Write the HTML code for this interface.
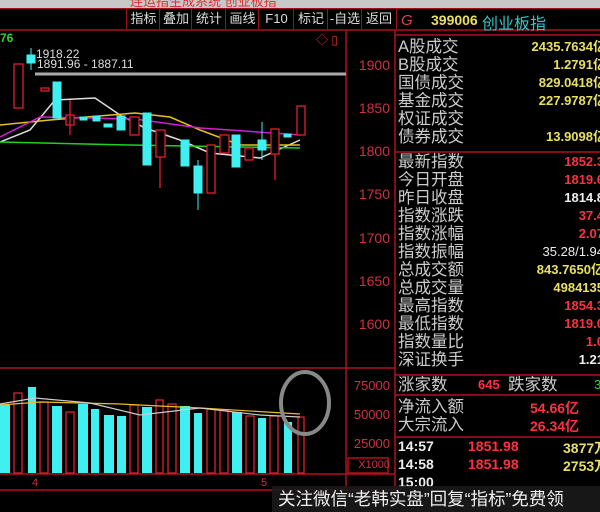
<!DOCTYPE html><html><head><meta charset="utf-8"><style>
body{margin:0;width:600px;height:512px;background:#000;overflow:hidden;position:relative;font-family:"Liberation Sans","Noto Sans CJK SC",sans-serif}
.a{position:absolute;white-space:nowrap}
.tb{position:absolute;top:9px;height:20px;border-left:1px solid #a01018;color:#ddd;font-size:13px;line-height:20px;text-align:center}
.l{position:absolute;left:398px;font-size:16.5px;color:#ccc;line-height:18px}
.v{position:absolute;right:0;font-size:13px;font-weight:bold;line-height:18px;text-align:right}
.y{color:#e8e060}.r{color:#ff3040}.w{color:#eee}
.ax{position:absolute;left:350px;width:40px;text-align:right;color:#d03040;font-size:14px}
</style></head><body>
<div class="a" style="left:0;top:0;width:600px;height:8px;background:#c8c8c8;overflow:hidden"><div class="a" style="left:130px;top:-9px;color:#e03030;font-size:13px">连运指生成系统 创业板指</div></div>
<div class="a" style="left:0;top:8px;width:600px;height:1px;background:#a01018"></div>
<div class="tb" style="left:126px;width:33px">指标</div><div class="tb" style="left:159px;width:32px">叠加</div><div class="tb" style="left:191px;width:34px">统计</div><div class="tb" style="left:225px;width:33px">画线</div><div class="tb" style="left:258px;width:35px">F10</div><div class="tb" style="left:293px;width:34px">标记</div><div class="tb" style="left:327px;width:34px">-自选</div><div class="tb" style="left:361px;width:34px;border-right:1px solid #a01018">返回</div>
<svg class="a" style="left:0;top:0" width="600" height="512">
<g stroke="#b01020" stroke-width="1.5" fill="none">
<line x1="0" y1="30" x2="600" y2="30"/><line x1="346" y1="30" x2="346" y2="490"/><line x1="395" y1="30" x2="395" y2="490"/>
<line x1="0" y1="368" x2="395" y2="368"/><line x1="0" y1="474" x2="395" y2="474"/><line x1="0" y1="490" x2="395" y2="490"/>
<line x1="395" y1="35" x2="600" y2="35"/><line x1="395" y1="152" x2="600" y2="152"/><line x1="395" y1="375" x2="600" y2="375"/><line x1="395" y1="395" x2="600" y2="395"/><line x1="395" y1="437" x2="600" y2="437"/>
<rect x="348" y="458" width="40" height="15"/>
</g>
<line x1="35" y1="74" x2="346" y2="74" stroke="#aaa" stroke-width="3"/>
<g stroke-width="1.5" fill="none">
<polyline stroke="#ddd" points="0,142 30,130 55,100 95,98 120,115 145,128 180,140 210,153 260,158 300,140"/>
<polyline stroke="#e8c020" points="0,125 50,120 135,113 170,117 200,130 240,145 300,145"/>
<polyline stroke="#d020d0" points="0,137 40,117 135,119 200,128 230,130 300,135"/>
<polyline stroke="#20d020" points="0,142 130,145 300,148"/>
</g>
<g stroke="#e02030" stroke-width="1.3" fill="#000">
<rect x="14" y="64" width="9" height="44"/><rect x="41" y="88" width="8" height="3"/><rect x="66" y="115" width="8" height="10"/><rect x="130" y="117" width="9" height="18"/><rect x="156" y="130" width="9" height="27"/><rect x="207" y="145" width="8" height="48"/><rect x="220" y="135" width="9" height="18"/><rect x="245" y="148" width="8" height="12"/><rect x="271" y="129" width="8" height="25"/><rect x="297" y="106" width="8" height="29"/>
<line x1="160" y1="157" x2="160" y2="188"/><line x1="70" y1="100" x2="70" y2="135"/><line x1="275" y1="154" x2="275" y2="180"/>
</g>
<g fill="#40f0f0" stroke="#40f0f0">
<line x1="31" y1="48" x2="31" y2="70"/><line x1="198" y1="160" x2="198" y2="210"/><line x1="262" y1="122" x2="262" y2="160"/>
<rect x="27" y="55" width="8" height="8"/><rect x="53" y="82" width="8" height="36"/><rect x="80" y="117" width="7" height="3"/><rect x="93" y="116" width="7" height="5"/><rect x="104" y="124" width="8" height="3"/><rect x="117" y="116" width="8" height="14"/><rect x="143" y="113" width="8" height="52"/><rect x="181" y="140" width="8" height="26"/><rect x="194" y="166" width="8" height="27"/><rect x="232" y="135" width="8" height="32"/><rect x="258" y="140" width="8" height="10"/><rect x="284" y="134" width="7" height="3"/>
</g>
<text x="36" y="58" fill="#ddd" font-size="12">1918.22</text><text x="37" y="68" fill="#ddd" font-size="12">1891.96 - 1887.11</text>
<text x="0" y="42" fill="#30d030" font-size="12" font-weight="bold">76</text>
<g fill="#40f0f0"><rect x="0" y="405" width="10" height="68"/><rect x="28" y="387" width="8" height="86"/><rect x="52" y="406" width="10" height="67"/><rect x="78" y="404" width="10" height="69"/><rect x="91" y="409" width="8" height="64"/><rect x="104" y="415" width="10" height="58"/><rect x="117" y="416" width="9" height="57"/><rect x="142" y="407" width="10" height="66"/><rect x="180" y="406" width="10" height="67"/><rect x="194" y="413" width="8" height="60"/><rect x="232" y="412" width="10" height="61"/><rect x="258" y="418" width="8" height="55"/><rect x="284" y="422" width="8" height="51"/></g>
<g fill="none" stroke="#e02030" stroke-width="1.3"><rect x="14" y="393" width="8" height="80"/><rect x="40" y="402" width="8" height="71"/><rect x="66" y="412" width="8" height="61"/><rect x="130" y="405" width="8" height="68"/><rect x="156" y="400" width="7" height="73"/><rect x="168" y="404" width="8" height="69"/><rect x="207" y="409" width="8" height="64"/><rect x="220" y="410" width="8" height="63"/><rect x="246" y="416" width="8" height="57"/><rect x="270" y="416" width="8" height="57"/><rect x="298" y="417" width="6" height="56"/></g>
<polyline fill="none" stroke="#e8c020" stroke-width="1.2" points="0,405 40,402 120,404 200,408 300,414"/>
<polyline fill="none" stroke="#ccc" stroke-width="1.2" points="0,404 35,398 90,403 140,415 200,408 260,415 300,417"/>
<ellipse cx="305" cy="403" rx="24" ry="31" fill="none" stroke="#888" stroke-width="4"/>
<text x="32" y="486" fill="#d03040" font-size="11">4</text><text x="261" y="486" fill="#d03040" font-size="11">5</text>
<text x="316" y="44" fill="#e03030" font-size="12">◇ ▯</text>
</svg>
<div class="ax" style="top:57px">1900</div><div class="ax" style="top:100px">1850</div><div class="ax" style="top:143px">1800</div><div class="ax" style="top:186px">1750</div><div class="ax" style="top:230px">1700</div><div class="ax" style="top:273px">1650</div><div class="ax" style="top:316px">1600</div>
<div class="ax" style="top:378px;font-size:13px">75000</div><div class="ax" style="top:407px;font-size:13px">50000</div><div class="ax" style="top:436px;font-size:13px">25000</div><div class="ax" style="top:459px;font-size:11px">X1000</div>
<div class="a" style="left:401px;top:12px;color:#e04050;font-size:15px;font-style:italic">G</div>
<div class="a" style="left:431px;top:12px;color:#e8e060;font-size:14px;font-weight:bold">399006</div>
<div class="a" style="left:482px;top:10px;color:#30c8c8;font-size:16px">创业板指</div>
<div class="l" style="top:38px">A股成交</div><div class="l" style="top:56px">B股成交</div><div class="l" style="top:74px">国债成交</div><div class="l" style="top:92px">基金成交</div><div class="l" style="top:110px">权证成交</div><div class="l" style="top:128px">债券成交</div>
<div class="l" style="top:153px">最新指数</div><div class="l" style="top:171px">今日开盘</div><div class="l" style="top:189px">昨日收盘</div><div class="l" style="top:207px">指数涨跌</div><div class="l" style="top:225px">指数涨幅</div><div class="l" style="top:243px">指数振幅</div><div class="l" style="top:261px">总成交额</div><div class="l" style="top:279px">总成交量</div><div class="l" style="top:297px">最高指数</div><div class="l" style="top:315px">最低指数</div><div class="l" style="top:333px">指数量比</div><div class="l" style="top:351px">深证换手</div>
<div class="l" style="top:376px">涨家数</div><div class="a r" style="left:478px;top:377px;font-size:13px;font-weight:bold">645</div><div class="l" style="left:508px;top:376px">跌家数</div><div class="a" style="left:594px;top:377px;color:#30d030;font-size:13px">3</div>
<div class="l" style="top:398px">净流入额</div><div class="l" style="top:416px">大宗流入</div>
<div class="a r" style="left:530px;top:398px;font-size:14px;font-weight:bold">54.66亿</div><div class="a r" style="left:530px;top:416px;font-size:14px;font-weight:bold">26.34亿</div>
<div class="a w" style="left:398px;top:438px;font-size:14px;font-weight:bold">14:57</div><div class="a r" style="left:468px;top:438px;font-size:14px;font-weight:bold">1851.98</div><div class="a y" style="left:563px;top:438px;font-size:14px;font-weight:bold">3877万</div>
<div class="a w" style="left:398px;top:456px;font-size:14px;font-weight:bold">14:58</div><div class="a r" style="left:468px;top:456px;font-size:14px;font-weight:bold">1851.98</div><div class="a y" style="left:563px;top:456px;font-size:14px;font-weight:bold">2753万</div>
<div class="a w" style="left:398px;top:474px;font-size:14px;font-weight:bold">15:00</div>
<div style="position:absolute;left:395px;width:205px;top:36px;height:116px">
<div class="v y" style="top:2px;right:-6px">2435.7634亿</div><div class="v y" style="top:20px;right:-6px">1.2791亿</div><div class="v y" style="top:38px;right:-6px">829.0418亿</div><div class="v y" style="top:56px;right:-6px">227.9787亿</div><div class="v y" style="top:92px;right:-6px">13.9098亿</div>
<div class="v r" style="top:117px;right:-4px">1852.3</div><div class="v r" style="top:135px;right:-4px">1819.6</div><div class="v w" style="top:153px;right:-4px">1814.8</div><div class="v r" style="top:171px;right:-4px">37.4</div><div class="v r" style="top:189px;right:-4px">2.07</div><div class="v w" style="top:207px;right:-4px;font-weight:normal">35.28/1.94</div><div class="v y" style="top:225px;right:-4px">843.7650亿</div><div class="v y" style="top:243px;right:-4px">4984135</div><div class="v r" style="top:261px;right:-4px">1854.3</div><div class="v r" style="top:279px;right:-4px">1819.0</div><div class="v r" style="top:297px;right:-4px">1.0</div><div class="v w" style="top:315px;right:-4px">1.21</div>
</div>
<div class="a" style="left:272px;top:486px;width:328px;height:26px;background:rgba(25,25,25,0.9);color:#eee;font-size:17.5px;line-height:26px;padding-left:6px">关注微信“老韩实盘”回复“指标”免费领</div>
</body></html>
